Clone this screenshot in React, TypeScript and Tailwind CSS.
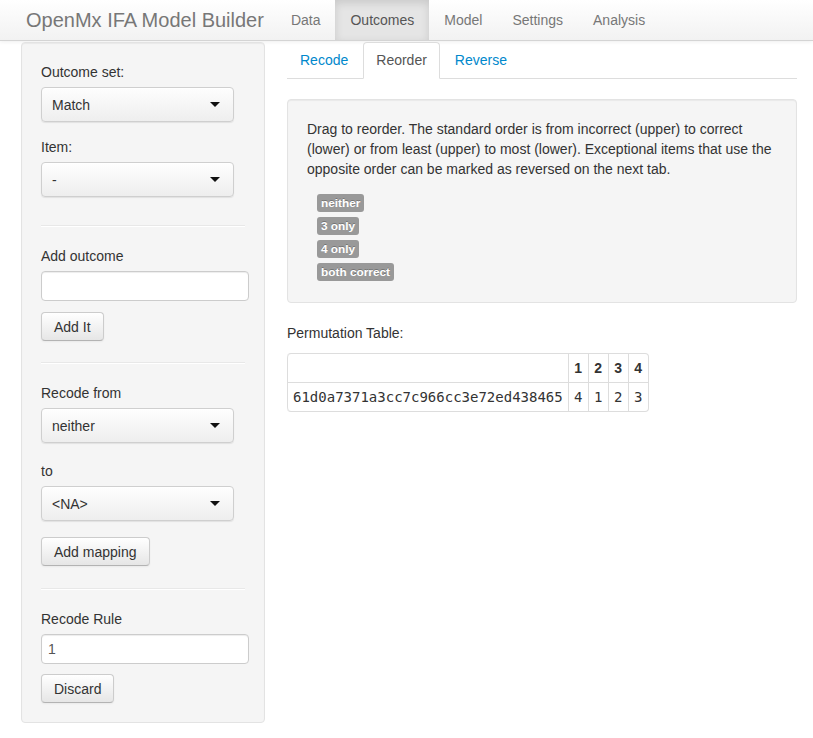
const navItems = ['Data', 'Outcomes', 'Model', 'Settings', 'Analysis']
const tabs = ['Recode', 'Reorder', 'Reverse']
const outcomes = ['neither', '3 only', '4 only', 'both correct']
const perm = ['4', '1', '2', '3']

function SelectBox({ value }: { value: string }) {
  return (
    <div className="flex h-[35px] w-[193px] items-center justify-between rounded-[4px] border border-[#cfcfcf] bg-linear-to-b from-[#fefefe] to-[#eeeeee] pl-[10px] pr-[13px] shadow-[0_1px_1px_rgba(0,0,0,0.08),inset_0_1px_0_rgba(255,255,255,0.8)]">
      <span>{value}</span>
      <span className="h-0 w-0 border-x-[5px] border-t-[5px] border-x-transparent border-t-[#111]" />
    </div>
  )
}

function Btn({ children }: { children: string }) {
  return (
    <button className="h-[29px] rounded-[4px] border border-[#cccccc] border-b-[#b3b3b3] bg-linear-to-b from-white to-[#e6e6e6] px-[12px] text-[14px] leading-[20px] text-[#333] shadow-[inset_0_1px_0_rgba(255,255,255,0.2),0_1px_2px_rgba(0,0,0,0.05)]">
      {children}
    </button>
  )
}

function TextBox({ value }: { value?: string }) {
  return (
    <div className="flex h-[30px] w-[208px] items-center rounded-[4px] border border-[#cccccc] bg-white px-[6px] text-[#555] shadow-[inset_0_1px_1px_rgba(0,0,0,0.075)]">
      {value}
    </div>
  )
}

function Rule() {
  return <div className="border-t border-b border-t-[#e8e8e8] border-b-white" />
}

export default function App() {
  return (
    <div className="min-h-screen bg-white font-['Liberation_Sans',Arial,sans-serif] text-[14px] leading-[20px] text-[#333]">
      <nav className="flex h-[41px] border-b border-[#d4d4d4] bg-linear-to-b from-white to-[#f2f2f2] shadow-[0_1px_4px_rgba(0,0,0,0.065)]">
        <span className="flex h-[40px] items-center pl-[26px] pr-[12px] text-[20px] text-[#777]">OpenMx IFA Model Builder</span>
        <ul className="flex">
          {navItems.map((item) => (
            <li
              key={item}
              className={
                item === 'Outcomes'
                  ? 'flex h-[40px] items-center bg-[#e5e5e5] px-[15px] text-[#555] shadow-[inset_0_3px_8px_rgba(0,0,0,0.125)]'
                  : 'flex h-[40px] items-center px-[15px] text-[#777]'
              }
            >
              {item}
            </li>
          ))}
        </ul>
      </nav>

      <div className="flex pl-[21px] pt-[1px]">
        <aside className="w-[244px] rounded-[4px] border border-[#e3e3e3] bg-[#f5f5f5] px-[19px] pt-[19px] pb-[19px] shadow-[inset_0_1px_1px_rgba(0,0,0,0.05)]">
          <p className="mb-[5px]">Outcome set:</p>
          <SelectBox value="Match" />
          <p className="mt-[15px] mb-[5px]">Item:</p>
          <SelectBox value="-" />

          <div className="mt-[28px] mb-[19px]">
            <Rule />
          </div>

          <p className="mb-[5px]">Add outcome</p>
          <TextBox />
          <div className="mt-[11px]">
            <Btn>Add It</Btn>
          </div>

          <div className="mt-[21px] mb-[19px]">
            <Rule />
          </div>

          <p className="mb-[5px]">Recode from</p>
          <SelectBox value="neither" />
          <p className="mt-[18px] mb-[5px]">to</p>
          <SelectBox value="<NA>" />
          <div className="mt-[16px]">
            <Btn>Add mapping</Btn>
          </div>

          <div className="mt-[22px] mb-[19px]">
            <Rule />
          </div>

          <p className="mb-[5px]">Recode Rule</p>
          <TextBox value="1" />
          <div className="mt-[10px]">
            <Btn>Discard</Btn>
          </div>
        </aside>

        <main className="ml-[22px] w-[510px]">
          <ul className="flex border-b border-[#ddd]">
            {tabs.map((tab) => (
              <li key={tab} className="-mb-px mr-[2px]">
                <span
                  className={
                    tab === 'Reorder'
                      ? 'block rounded-t-[4px] border border-[#ddd] border-b-white bg-white px-[12px] pt-[7px] pb-[8px] text-[#555]'
                      : 'block rounded-t-[4px] border border-transparent px-[12px] pt-[7px] pb-[8px] text-[#0088cc]'
                  }
                >
                  {tab}
                </span>
              </li>
            ))}
          </ul>

          <section className="mt-[20px] rounded-[4px] border border-[#e3e3e3] bg-[#f5f5f5] px-[19px] pt-[19px] pb-[20px] shadow-[inset_0_1px_1px_rgba(0,0,0,0.05)]">
            <p className="mb-[10px]">
              Drag to reorder. The standard order is from incorrect (upper) to correct (lower) or from least (upper) to
              most (lower). Exceptional items that use the opposite order can be marked as reversed on the next tab.
            </p>
            <div className="flex flex-col pl-[10px]">
              {outcomes.map((o) => (
                <div key={o} className="flex h-[23px] items-start pt-[5px]">
                  <span className="flex h-[18px] items-center rounded-[3px] bg-[#999] px-[4px] text-[11.844px] font-bold leading-[14px] text-white [text-shadow:0_-1px_0_rgba(0,0,0,0.25)]">
                    {o}
                  </span>
                </div>
              ))}
            </div>
            <div className="h-px" />
          </section>

          <p className="mt-[20px] mb-[10px]">Permutation Table:</p>
          <table className="border-separate border-spacing-0 rounded-[4px] border border-l-0 border-[#ddd]">
            <thead>
              <tr>
                <th className="rounded-tl-[4px] border-l border-[#ddd] px-[5px] py-[4px]" />
                {['1', '2', '3', '4'].map((h) => (
                  <th key={h} className="w-[20px] border-l border-[#ddd] px-[5px] py-[4px] text-center font-bold">
                    {h}
                  </th>
                ))}
              </tr>
            </thead>
            <tbody>
              <tr>
                <td className="rounded-bl-[4px] border-t border-l border-[#ddd] px-[5px] py-[4px] font-['DejaVu_Sans_Mono',monospace]">
                  61d0a7371a3cc7c966cc3e72ed438465
                </td>
                {perm.map((v, i) => (
                  <td
                    key={i}
                    className="w-[20px] border-t border-l border-[#ddd] px-[5px] py-[4px] text-center font-['DejaVu_Sans_Mono',monospace]"
                  >
                    {v}
                  </td>
                ))}
              </tr>
            </tbody>
          </table>
        </main>
      </div>
    </div>
  )
}
